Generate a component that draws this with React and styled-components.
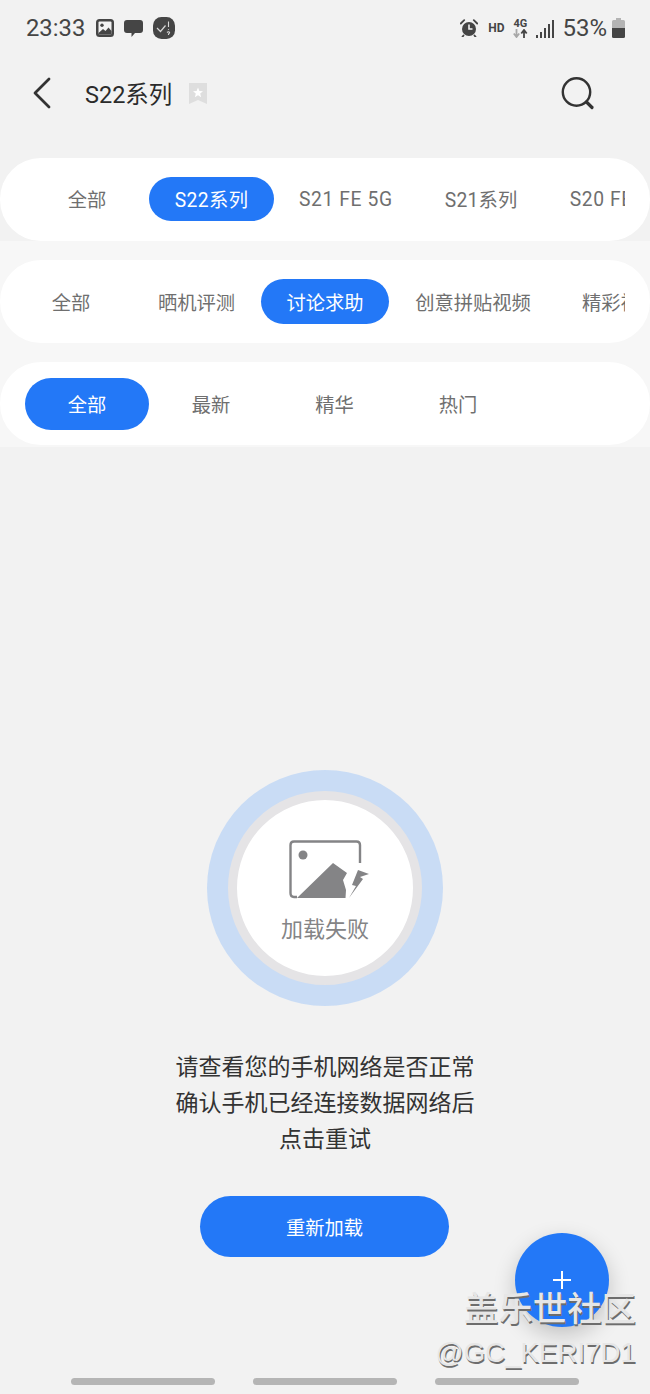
import React from "react";
import styled, { createGlobalStyle } from "styled-components";

const GlobalStyle = createGlobalStyle`
  html, body {
    margin: 0;
    padding: 0;
    background: #f2f2f2;
  }
  * {
    box-sizing: border-box;
  }
`;

const FONT = `Roboto, "Noto Sans CJK SC", sans-serif`;

const brandTabs = [
  { label: "全部", minWidth: 124 },
  { label: "S22系列", active: true, minWidth: 125, tracking: 0.4 },
  { label: "S21 FE 5G", minWidth: 141, tracking: 0.6 },
  { label: "S21系列", minWidth: 127, tracking: 0.2 },
  { label: "S20 FE", tracking: 0.6 },
];

const topicTabs = [
  { label: "全部", minWidth: 122 },
  { label: "晒机评测", minWidth: 129 },
  { label: "讨论求助", active: true, minWidth: 128 },
  { label: "创意拼贴视频", minWidth: 168 },
  { label: "精彩视频" },
];

const sortTabs = [
  { label: "全部", active: true, minWidth: 124 },
  { label: "最新", minWidth: 124 },
  { label: "精华", minWidth: 123 },
  { label: "热门", minWidth: 124 },
];

function Tabs({ items, inset, pillHeight, raise }) {
  return (
    <TabRow $inset={inset} $raise={raise}>
      <TabTrack>
        {items.map((item) => (
          <Tab
            key={item.label}
            $active={item.active}
            $minWidth={item.minWidth}
            $tracking={item.tracking}
            $height={pillHeight}
          >
            {item.label}
          </Tab>
        ))}
      </TabTrack>
    </TabRow>
  );
}

function StatusLeftIcons() {
  return (
    <>
      <svg width="18" height="18" viewBox="0 0 18 18">
        <rect width="18" height="18" rx="3.5" fill="#454545" />
        <rect x="2.5" y="2.5" width="13" height="13" rx="1" fill="#f2f2f2" />
        <circle cx="6" cy="6.2" r="1.7" fill="#454545" />
        <path d="M2.5 14 L7 10 L9.5 12 L12.5 8.5 L15.5 12 V15.5 H2.5 Z" fill="#454545" />
      </svg>
      <svg width="19" height="19" viewBox="0 0 19 19">
        <path
          d="M3 1 H16 Q19 1 19 4 V11 Q19 14 16 14 H11 L7.5 18 V14 H3 Q0 14 0 11 V4 Q0 1 3 1 Z"
          fill="#454545"
        />
      </svg>
      <svg width="22" height="22" viewBox="0 0 22 22">
        <rect width="22" height="22" rx="8.5" fill="#454545" />
        <path d="M4 11 L7.5 14.5 L12.5 8.5" fill="none" stroke="#d8d8d8" strokeWidth="1.2" />
        <path d="M15.5 4.5 V10 M15.5 12 V12.8 M14 15.5 Q15.5 14 16.6 15.3 Q16.6 16.4 15.5 17 V18" fill="none" stroke="#d8d8d8" strokeWidth="1.1" />
      </svg>
    </>
  );
}

function StatusRightIcons() {
  return (
    <>
      <svg width="18" height="18" viewBox="0 0 18 18">
        <circle cx="9" cy="10" r="7" fill="#454545" />
        <path d="M9 5.5 V10 H12.5" fill="none" stroke="#f2f2f2" strokeWidth="1.6" />
        <path d="M0.8 4.5 L4.2 1.2 M17.2 4.5 L13.8 1.2 M3.5 16.5 L2.5 17.8 M14.5 16.5 L15.5 17.8" stroke="#454545" strokeWidth="1.8" strokeLinecap="round" />
      </svg>
      <HdLabel>HD</HdLabel>
      <NetworkBadge>
        <NetworkLabel>4G</NetworkLabel>
        <svg width="15" height="9" viewBox="0 0 15 9">
          <path d="M3.5 0 V7 M0.8 4.5 L3.5 8 L6.2 4.5" fill="none" stroke="#a8a8a8" strokeWidth="1.8" />
          <path d="M11 9 V2 M8.3 4.5 L11 1 L13.7 4.5" fill="none" stroke="#454545" strokeWidth="1.8" />
        </svg>
      </NetworkBadge>
      <svg width="18" height="19" viewBox="0 0 18 19">
        <rect x="0" y="16" width="2" height="3" fill="#454545" />
        <rect x="4" y="13" width="2" height="6" fill="#454545" />
        <rect x="8" y="9" width="2" height="10" fill="#454545" />
        <rect x="12" y="5" width="2" height="14" fill="#454545" />
        <rect x="16" y="1" width="2" height="18" fill="#454545" />
      </svg>
      <BatteryText>53%</BatteryText>
      <svg width="13" height="20" viewBox="0 0 13 20">
        <path d="M4 0 H9 V2 H11.5 Q13 2 13 3.5 V10 H0 V3.5 Q0 2 1.5 2 H4 Z" fill="#b4b4b4" />
        <path d="M0 10 H13 V18.5 Q13 20 11.5 20 H1.5 Q0 20 0 18.5 Z" fill="#454545" />
      </svg>
    </>
  );
}

export default function App() {
  return (
    <Page>
      <GlobalStyle />
      <StatusBar>
        <StatusGroup $gap={10}>
          <Clock>23:33</Clock>
          <StatusLeftIcons />
        </StatusGroup>
        <StatusGroup $gap={8}>
          <StatusRightIcons />
        </StatusGroup>
      </StatusBar>

      <Header>
        <svg width="20" height="32" viewBox="0 0 20 32">
          <path d="M17 2 L3 16 L17 30" fill="none" stroke="#333" strokeWidth="2.8" strokeLinecap="round" strokeLinejoin="round" />
        </svg>
        <Title>S22系列</Title>
        <svg width="18" height="21" viewBox="0 0 18 21">
          <path d="M0 0 H18 V21 L9 17 L0 21 Z" fill="#dedede" />
          <path d="M9 4.5 L10.4 8 L14 8.3 L11.2 10.6 L12.1 14.2 L9 12.2 L5.9 14.2 L6.8 10.6 L4 8.3 L7.6 8 Z" fill="#fff" />
        </svg>
        <SearchSlot>
          <svg width="34" height="33" viewBox="0 0 34 33">
            <circle cx="15.5" cy="15" r="13.7" fill="none" stroke="#333" strokeWidth="2.4" />
            <path d="M25.5 25 L31 30.5" stroke="#333" strokeWidth="3.2" strokeLinecap="round" />
          </svg>
        </SearchSlot>
      </Header>

      <Tabs items={brandTabs} inset={25} pillHeight={44} raise={1} />
      <TabBand>
        <Tabs items={topicTabs} inset={10} pillHeight={45} />
        <Tabs items={sortTabs} inset={25} pillHeight={52} />
      </TabBand>

      <EmptyState>
        <OuterRing>
          <InnerRing>
            <FailIcon width="82" height="60" viewBox="0 0 82 60">
              <path d="M71 23 V5 Q71 1.500 67.500 1.500 H5 Q1.500 1.500 1.500 5 V53 Q1.500 57 5 57 H8" fill="none" stroke="#848486" strokeWidth="2.4" />
              <circle cx="14" cy="15" r="4.500" fill="#848486" />
              <path d="M8 58 L44 23 L58 33 L54 40 L57 50 L56.500 58 Z" fill="#848486" />
              <path d="M80 34 L69 30 L63 45 L67 46 L60 58 L74 39 L71 37 Z" fill="#848486" />
            </FailIcon>
            <FailText>加载失败</FailText>
          </InnerRing>
        </OuterRing>
        <Message>
          <span>请查看您的手机网络是否正常</span>
          <span>确认手机已经连接数据网络后</span>
          <span>点击重试</span>
        </Message>
        <ReloadButton>重新加载</ReloadButton>
      </EmptyState>

      <Fab aria-label="add">
        <svg width="18" height="18" viewBox="0 0 18 18">
          <path d="M9 0 V18 M0 9 H18" stroke="#fff" strokeWidth="2" />
        </svg>
      </Fab>

      <Watermark>
        <WatermarkTitle>盖乐世社区</WatermarkTitle>
        <WatermarkUser>@GC_KERI7D1</WatermarkUser>
      </Watermark>

      <NavBar>
        <NavHandle />
        <NavHandle />
        <NavHandle />
      </NavBar>
    </Page>
  );
}

const Page = styled.div`
  position: relative;
  width: 650px;
  height: 1394px;
  overflow: hidden;
  display: flex;
  flex-direction: column;
  background: #f2f2f2;
  font-family: ${FONT};
`;

const StatusBar = styled.div`
  height: 56px;
  padding: 0 25px 0 26px;
  display: flex;
  align-items: center;
  justify-content: space-between;
  color: #454545;
`;

const StatusGroup = styled.div`
  display: flex;
  align-items: center;
  gap: ${(p) => p.$gap}px;
`;

const Clock = styled.span`
  font-size: 23.8px;
  margin-right: 1px;
`;

const HdLabel = styled.span`
  font-size: 12px;
  font-weight: 700;
  margin-left: 2px;
`;

const NetworkBadge = styled.span`
  display: flex;
  flex-direction: column;
  align-items: center;
  width: 16px;
`;

const NetworkLabel = styled.span`
  font-size: 11px;
  line-height: 11px;
  font-weight: 700;
`;

const BatteryText = styled.span`
  font-size: 24px;
  margin-right: -3px;
`;

const Header = styled.header`
  height: 74px;
  padding: 0 55px 0 32px;
  margin-bottom: 28px;
  display: flex;
  align-items: center;
  gap: 18px;
`;

const Title = styled.h1`
  margin: 0 -1px 0 15px;
  font-size: 23.5px;
  font-weight: 400;
  color: #2b2b2b;
`;

const SearchSlot = styled.div`
  margin-left: auto;
  display: flex;
`;

const TabRow = styled.div`
  height: 83px;
  padding: 0 25px ${(p) => p.$raise || 0}px ${(p) => p.$inset}px;
  display: flex;
  align-items: center;
  background: #fff;
  border-radius: 41px;
`;

const TabTrack = styled.div`
  flex: 1;
  display: flex;
  align-items: center;
  overflow: hidden;
`;

const Tab = styled.div`
  flex: none;
  height: ${(p) => p.$height}px;
  min-width: ${(p) => p.$minWidth || 0}px;
  padding: 0 25px;
  display: flex;
  align-items: center;
  justify-content: center;
  border-radius: 26px;
  font-size: 19.3px;
  letter-spacing: ${(p) => p.$tracking || 0}px;
  white-space: nowrap;
  color: ${(p) => (p.$active ? "#fff" : "#6f6f6f")};
  background: ${(p) => (p.$active ? "#2378f7" : "transparent")};
`;

const TabBand = styled.div`
  padding: 19px 0 2px;
  display: flex;
  flex-direction: column;
  gap: 19px;
  background: #f7f7f7;
`;

const EmptyState = styled.main`
  padding-top: 323px;
  display: flex;
  flex-direction: column;
  align-items: center;
`;

const OuterRing = styled.div`
  width: 236px;
  height: 236px;
  border-radius: 50%;
  display: flex;
  align-items: center;
  justify-content: center;
  background: #c9dcf5;
`;

const InnerRing = styled.div`
  width: 194px;
  height: 194px;
  border: 9px solid #e5e4e6;
  border-radius: 50%;
  padding-top: 40px;
  display: flex;
  flex-direction: column;
  align-items: center;
  background: #fff;
`;

const FailIcon = styled.svg`
  margin-left: 10px;
`;

const FailText = styled.div`
  margin-top: 14px;
  font-size: 22px;
  line-height: 32px;
  color: #848486;
`;

const Message = styled.p`
  margin: 44px 0 38px;
  display: flex;
  flex-direction: column;
  align-items: center;
  font-size: 23px;
  line-height: 36px;
  color: #333;
`;

const ReloadButton = styled.button`
  width: 249px;
  height: 61px;
  margin-right: 1px;
  border: none;
  border-radius: 31px;
  background: #2378f7;
  color: #fff;
  font-family: ${FONT};
  font-size: 19.3px;
`;

const Fab = styled.button`
  position: absolute;
  left: 515px;
  top: 1233px;
  width: 94px;
  height: 94px;
  padding: 0;
  border: none;
  border-radius: 50%;
  display: flex;
  align-items: center;
  justify-content: center;
  background: #2378f7;
  box-shadow: 0 8px 22px rgba(0, 0, 0, 0.2);
`;

const Watermark = styled.div`
  position: absolute;
  right: 14px;
  top: 1288px;
  display: flex;
  flex-direction: column;
  align-items: flex-end;
  color: #e6e6e6;
  text-shadow: 1px 2px 0 #6d6d6d;
`;

const WatermarkTitle = styled.div`
  font-size: 34.4px;
  line-height: 42px;
  font-weight: 500;
`;

const WatermarkUser = styled.div`
  margin-top: 4px;
  font-family: "Liberation Sans", sans-serif;
  font-size: 27.7px;
  line-height: 38px;
`;

const NavBar = styled.nav`
  position: absolute;
  left: 71px;
  bottom: 9px;
  display: flex;
  gap: 38px;
`;

const NavHandle = styled.span`
  width: 144px;
  height: 7px;
  border-radius: 4px;
  background: #b5b5b5;
`;
